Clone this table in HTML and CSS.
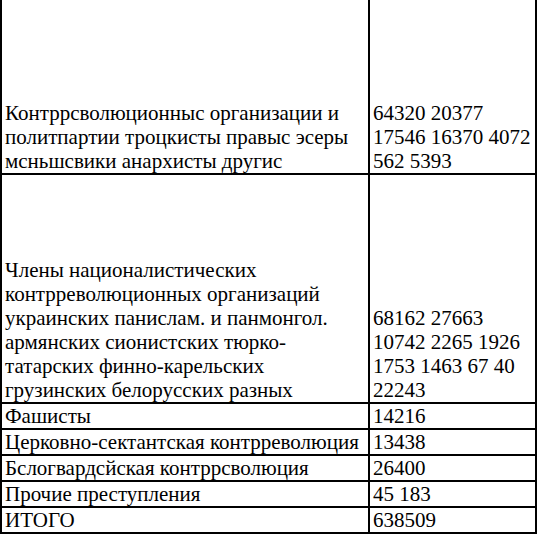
FILE: index.html
```html
<!DOCTYPE html>
<html lang="ru">
<head>
<meta charset="utf-8">
<title>Таблица</title>
<link rel="stylesheet" href="styles.css">
</head>
<body>
<table class="stats">
  <tr class="row-tall">
    <td class="label">Контррсволюционныс организации и<br>политпартии троцкисты правыс эсеры<br>мсньшсвики анархисты другис</td>
    <td class="value">64320 20377<br>17546 16370 4072<br>562 5393</td>
  </tr>
  <tr class="row-taller">
    <td class="label">Члены националистических<br>контрреволюционных организаций<br>украинских панислам. и панмонгол.<br>армянских сионистских тюрко-<br>татарских финно-карельских<br>грузинских белорусских разных</td>
    <td class="value">68162 27663<br>10742 2265 1926<br>1753 1463 67 40<br>22243</td>
  </tr>
  <tr class="row-single">
    <td class="label">Фашисты</td>
    <td class="value">14216</td>
  </tr>
  <tr class="row-single">
    <td class="label">Церковно-сектантская контрреволюция</td>
    <td class="value">13438</td>
  </tr>
  <tr class="row-single">
    <td class="label">Бслогвардсйская контррсволюция</td>
    <td class="value">26400</td>
  </tr>
  <tr class="row-single">
    <td class="label">Прочие преступления</td>
    <td class="value">45 183</td>
  </tr>
  <tr class="row-single">
    <td class="label">ИТОГО</td>
    <td class="value">638509</td>
  </tr>
</table>
</body>
</html>
```

FILE: styles.css
```css
html, body {
  margin: 0;
  padding: 0;
  background: #ffffff;
}

.stats {
  border-collapse: separate;
  border-spacing: 0;
  border-left: 2px solid #000;
  table-layout: fixed;
  width: 537px;
  color: #000;
}

.stats td {
  font-family: "Times New Roman", Times, "Liberation Serif", Tinos, "Nimbus Roman", "Nimbus Roman No9 L", FreeSerif, "Noto Serif", "DejaVu Serif", serif;
  font-size: 21px;
  line-height: 24px;
  border-right: 2px solid #000;
  border-bottom: 2px solid #000;
  padding: 0 0 0 3px;
  vertical-align: bottom;
  white-space: nowrap;
  overflow: hidden;
}

.stats .label {
  width: 363px;
}

.stats .value {
  width: 162px;
}

.row-tall td {
  height: 173px;
}

.row-taller td {
  height: 227px;
}

.row-single td {
  height: 24px;
}
```
